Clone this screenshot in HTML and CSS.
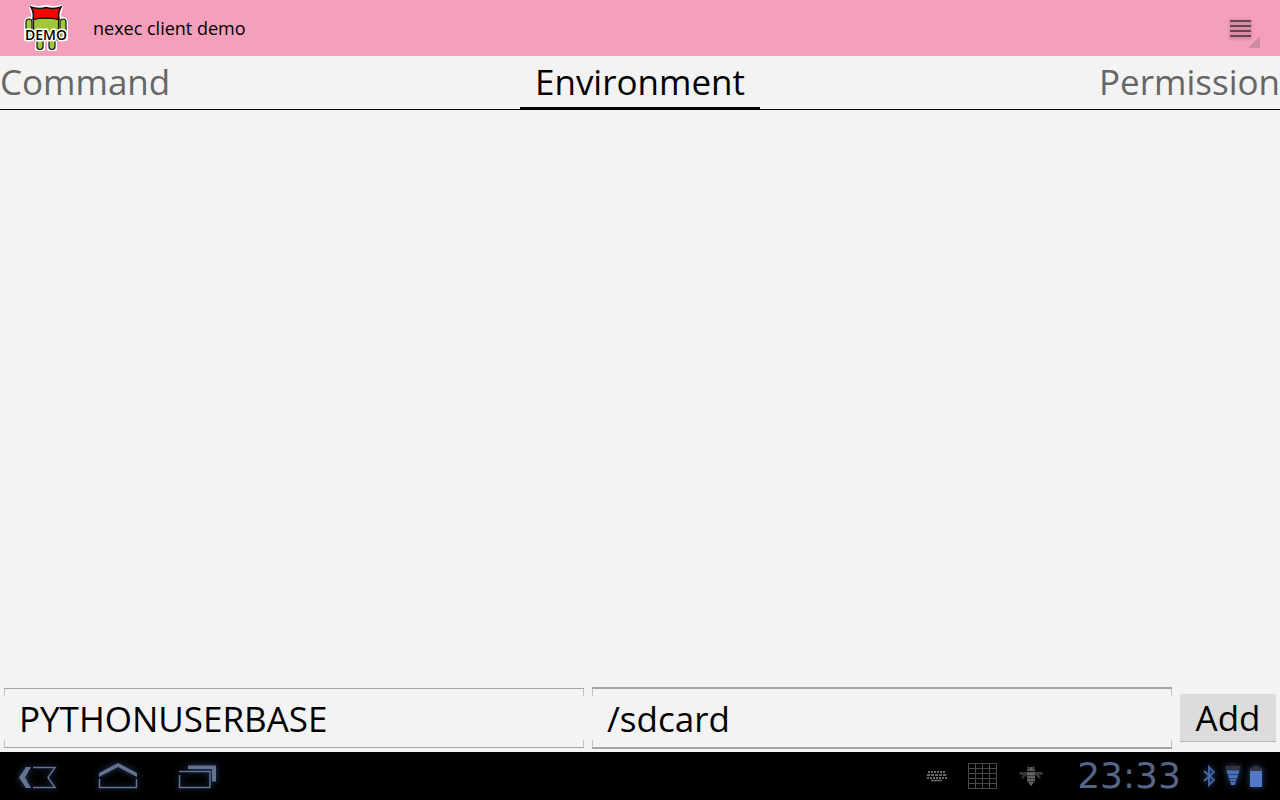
FILE: index.html
```html
<!DOCTYPE html>
<html lang="en">
<head>
<meta charset="utf-8">
<meta name="viewport" content="width=device-width, initial-scale=1">
<title>nexec client demo</title>
<link rel="stylesheet" href="styles.css">
</head>
<body>
<header class="action-bar">
  <svg class="app-icon" viewBox="0 0 48 48" aria-hidden="true">
    <g stroke="#fff" stroke-width="4" stroke-linejoin="round" fill="#fff">
      <path d="M9 3q7 2 15 0q8 2 15 0l-2 7v5h2q5-1 5 4v16H4V19q0-5 5-4h2v-5zM15 34h6v11h-6zM27 34h6v11h-6z"/>
    </g>
    <g fill="#a4c639" stroke="#111" stroke-width="1.2">
      <rect x="4" y="15" width="6" height="20" rx="3"/>
      <rect x="38" y="15" width="6" height="20" rx="3"/>
      <rect x="15" y="30" width="6" height="15.500" rx="3"/>
      <rect x="27" y="30" width="6" height="15.500" rx="3"/>
      <path d="M11.500 14h25v20q0 2-2 2h-21q-2 0-2-2z"/>
    </g>
    <path d="M9 3q7 2.500 15 .5q8 2 15-.5q-3.500 6-2 12.500q-13-3-26 0q1.500-6.500-2-12.500z" fill="#f00" stroke="#111" stroke-width="1.500"/>
    <text class="app-icon-text" x="24" y="36" text-anchor="middle">DEMO</text>
  </svg>
  <h1 class="app-title">nexec client demo</h1>
  <button class="menu-button" aria-label="Menu">
    <svg class="menu-icon" viewBox="0 0 36 36" aria-hidden="true">
      <rect class="menu-glow" x="4" y="4" width="23" height="21"/>
      <path d="M5 6h21M5 11h21M5 16h21M5 21h21" stroke="#644554" stroke-width="2"/>
      <path d="M35 21v12H23z" fill="#cf8ba4"/>
    </svg>
  </button>
</header>
<nav class="tabs">
  <a class="tab" href="#command">Command</a>
  <a class="tab tab-current" href="#environment" aria-current="page">Environment</a>
  <a class="tab tab-last" href="#permission">Permission</a>
</nav>
<main class="content"></main>
<form class="entry">
  <input class="field" type="text" aria-label="Name" value="PYTHONUSERBASE">
  <input class="field field-strong" type="text" aria-label="Value" value="/sdcard">
  <button class="add" type="button">Add</button>
</form>
<footer class="system-bar">
  <div class="nav-keys">
    <button class="key" aria-label="Back">
      <svg class="key-icon" viewBox="0 0 48 32" aria-hidden="true">
        <path d="M12 5h5l-6 10.500 6 10.500h-5L5 15.500z" fill="#66708f"/>
        <path d="M19 5.500h22l-7 10 7 10H19" fill="none" stroke="#66708f" stroke-width="1.500"/>
      </svg>
    </button>
    <button class="key" aria-label="Home">
      <svg class="key-icon" viewBox="0 0 48 32" aria-hidden="true">
        <path d="M5 11L24 1l19 10v4L24 5 5 15z" fill="#66708f"/>
        <path d="M5.500 17v8.500h37V17" fill="none" stroke="#66708f" stroke-width="1.500"/>
      </svg>
    </button>
    <button class="key" aria-label="Recent apps">
      <svg class="key-icon" viewBox="0 0 48 32" aria-hidden="true">
        <path d="M14 3.500h28v16h-4V7H14z" fill="#66708f"/>
        <path d="M5 9.500h31v16H5.500V13" fill="none" stroke="#66708f" stroke-width="1.500"/>
      </svg>
    </button>
  </div>
  <div class="status">
    <svg class="keyboard-icon" viewBox="0 0 20 12" aria-hidden="true">
      <g fill="none" stroke="#686868" stroke-width="2">
        <path d="M1 2h18" stroke-dasharray="2 1"/>
        <path d="M0 5h20" stroke-dasharray="3 1"/>
        <path d="M0 8h20" stroke-dasharray="2 1"/>
        <path d="M4 10.500h11" stroke-width="1.500"/>
      </g>
    </svg>
    <svg class="grid-icon" viewBox="0 0 29 26" aria-hidden="true">
      <path d="M.5.5h28v25H.5zM7.500.5v25M14.500.5v25M21.500.5v25M.5 5.500h28M.5 10.500h28M.5 15.500h28M.5 20.500h28" fill="none" stroke="#4a4a4a"/>
    </svg>
    <svg class="bee-icon" viewBox="0 0 24 22" aria-hidden="true">
      <path d="M0 7h8v3l-5 4-1-1 2-3H1zM24 7h-8v3l5 4 1-1-2-3h3z" fill="#353535"/>
      <path d="M9 1v2M15 1v2" stroke="#555" stroke-width="1"/>
      <path d="M8 7h8v9l-4 5-4-5z" fill="#3a3a3a"/>
      <path d="M8 6q0-4 4-4t4 4zM8 7h8v3H8zM8 11h8v2H8zM8 14h8v2H8zM9 17h6l-3 4z" fill="#606060"/>
      <path d="M9 4h2M13 4h2" stroke="#222"/>
    </svg>
    <time class="clock">23:33</time>
    <svg class="bluetooth-icon" viewBox="0 0 12 22" aria-hidden="true">
      <path d="M1 6l10 9-5 5V2l5 5-10 9" fill="none" stroke="#4668a8" stroke-width="1.800"/>
    </svg>
    <svg class="wifi-icon" viewBox="0 0 16 20" aria-hidden="true">
      <path d="M0 0h16l-2 4H2z" fill="#30343e"/>
      <path d="M1.500 4h13L10 19H6z" fill="#2a4070"/>
      <path d="M1.500 4.500h13l-1 3.500h-11zM3 9h10l-1 3H4zM4.500 13h7l-.5 2H5zM5.500 16h5L10 19H6z" fill="#4a6eb8"/>
    </svg>
    <svg class="battery-icon" viewBox="0 0 12 21" aria-hidden="true">
      <path d="M3 0h6v2h3v3H0V2h3z" fill="#30343e"/>
      <path d="M0 5h12v16H0z" fill="#5279c8"/>
    </svg>
  </div>
</footer>
</body>
</html>
```
FILE: styles.css
```css
* { box-sizing: border-box; }
body {
  margin: 0;
  min-height: 100vh;
  display: flex;
  flex-direction: column;
  background: #f3f3f3;
  color: #000;
  font-family: "Open Sans", "Noto Sans", sans-serif;
}
button { border: 0; padding: 0; background: none; font: inherit; color: inherit; }
svg { display: block; flex: none; }

.action-bar {
  display: flex;
  align-items: center;
  height: 56px;
  padding: 0 19px 0 22px;
  background: #f69fbb;
}
.app-icon { width: 48px; height: 48px; }
.app-icon-text {
  font: 600 14px "Open Sans", sans-serif;
  fill: #000;
  stroke: #fff;
  stroke-width: 3px;
  stroke-linejoin: round;
  paint-order: stroke;
}
.app-title {
  flex: 1;
  margin: 0 0 0 23px;
  font-size: 18px;
  font-weight: 400;
  line-height: 24px;
}
.menu-icon { width: 36px; height: 36px; margin-top: 10px; }
.menu-glow { fill: #d98ba5; filter: blur(1px); }

.tabs {
  display: grid;
  grid-template-columns: 1fr auto 1fr;
  height: 54px;
  border-bottom: 1px solid #000;
}
.tab {
  color: #666;
  font-size: 35px;
  line-height: 51px;
  text-decoration: none;
}
.tab-current {
  padding: 0 15px;
  color: #000;
  box-shadow: inset 0 -2px #000;
}
.tab-last { text-align: right; }

.content { flex: 1; }

.entry {
  display: flex;
  align-items: center;
  gap: 8px;
  height: 68px;
  padding: 0 4px;
}
.field {
  --edge: linear-gradient(#c4c4c4, #c4c4c4);
  flex: 1;
  min-width: 0;
  height: 60px;
  padding: 0 15px;
  border: 0 solid #a5a5a5;
  border-width: 1px 0;
  border-radius: 0;
  outline: 0;
  background: var(--edge) left top, var(--edge) right top, var(--edge) left bottom, var(--edge) right bottom;
  background-size: 1px 7px;
  background-repeat: no-repeat;
  color: #000;
  font: inherit;
  font-size: 35px;
}
.field-strong { height: 62px; border-width: 2px 0; }
.add {
  width: 96px;
  height: 48px;
  background: #dcdcdc;
  border-bottom: 1px solid #b8b8b8;
  font-size: 35px;
  line-height: 48px;
}

.system-bar {
  display: flex;
  align-items: center;
  justify-content: space-between;
  height: 48px;
  padding: 0 18px 0 14px;
  background: #000;
}
.nav-keys { display: flex; gap: 32px; }
.key-icon { width: 48px; height: 32px; margin-top: 4px; filter: drop-shadow(0 0 3px #2a4674); }
.status { display: flex; align-items: center; }
.keyboard-icon { width: 20px; height: 12px; margin-right: 21px; }
.grid-icon { width: 29px; height: 26px; margin-right: 22px; }
.bee-icon { width: 24px; height: 22px; margin-right: 18px; }
.clock {
  width: 136px;
  text-align: center;
  color: #56658a;
  font-family: "DejaVu Sans", sans-serif;
  font-size: 36px;
  line-height: 48px;
}
.bluetooth-icon { width: 12px; height: 22px; margin: 0 10px 0 6px; filter: drop-shadow(0 0 3px #2a4674); }
.wifi-icon { width: 16px; height: 20px; margin-right: 9px; filter: drop-shadow(0 0 3px #2a4674); }
.battery-icon { width: 12px; height: 21px; filter: drop-shadow(0 0 3px #2a4674); }
```
